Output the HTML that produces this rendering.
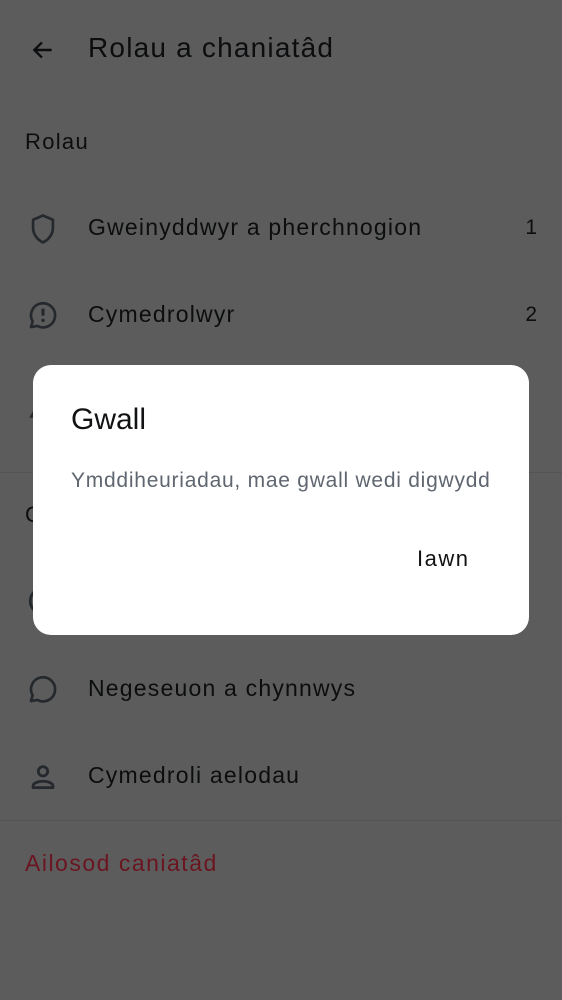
<!DOCTYPE html>
<html><head><meta charset="utf-8"><style>
*{margin:0;padding:0;box-sizing:border-box}
body{width:562px;height:1000px;background:#5c5c5c;font-family:"Liberation Sans",Roboto,sans-serif;position:relative;overflow:hidden;color:#0c0d0e}
.a{position:absolute;white-space:nowrap}
.t{font-size:28px;left:88px;top:32px;letter-spacing:1.2px}
.h{font-size:22px;left:25px;letter-spacing:1.3px}
.r{font-size:23px;left:88px;letter-spacing:1.2px}
.n{font-size:21px;right:25px}
.ic{position:absolute;left:26px}
.div{position:absolute;left:0;right:0;height:1px;background:#545454}
.dlg{position:absolute;left:33px;top:365px;width:496px;height:270px;background:#fff;border-radius:18px}
</style></head><body>
<svg class="a" style="left:30px;top:37px" width="26" height="26" viewBox="0 0 24 24"><path d="M20 12H4M11 5l-7 7 7 7" fill="none" stroke="#0c0d0e" stroke-width="2.2"/></svg>
<div class="a t">Rolau a chaniatâd</div>
<div class="a h" style="top:129px">Rolau</div>

<svg class="ic" style="top:212px" width="34" height="34" viewBox="0 0 24 24"><path d="M12 2.5l7 3v5.5c0 5-3.2 8.7-7 10.5-3.8-1.8-7-5.5-7-10.5V5.5z" fill="none" stroke="#25292d" stroke-width="1.9" stroke-linejoin="round"/></svg>
<div class="a r" style="top:214px">Gweinyddwyr a pherchnogion</div>
<div class="a n" style="top:216px">1</div>

<svg class="ic" style="top:298px" width="34" height="34" viewBox="0 0 24 24"><path d="M3.5 20.5l1.2-4A8.5 8.5 0 1 1 8 19.7z" fill="none" stroke="#25292d" stroke-width="1.9" stroke-linejoin="round"/><path d="M12 7.5v5" stroke="#25292d" stroke-width="2.2"/><circle cx="12" cy="15.8" r="1.2" fill="#25292d"/></svg>
<div class="a r" style="top:301px">Cymedrolwyr</div>
<div class="a n" style="top:303px">2</div>

<svg class="ic" style="top:388px" width="34" height="34" viewBox="0 0 24 24"><path d="M4 20l8-14 8 14z" fill="none" stroke="#25292d" stroke-width="2"/></svg>
<div class="div" style="top:472px"></div>
<div class="a h" style="top:502px">Caniatâd</div>
<svg class="ic" style="top:584px" width="34" height="34" viewBox="0 0 24 24"><circle cx="12" cy="12" r="9" fill="none" stroke="#25292d" stroke-width="2"/></svg>

<svg class="ic" style="top:672px" width="34" height="34" viewBox="0 0 24 24"><path d="M3.5 20.5l1.2-4A8.5 8.5 0 1 1 8 19.7z" fill="none" stroke="#25292d" stroke-width="1.9" stroke-linejoin="round"/></svg>
<div class="a r" style="top:675px">Negeseuon a chynnwys</div>

<svg class="ic" style="top:760px" width="34" height="34" viewBox="0 0 24 24"><circle cx="12" cy="8" r="3.3" fill="none" stroke="#25292d" stroke-width="2"/><path d="M5 19.5v-1.2c0-2 3.5-3.3 7-3.3s7 1.3 7 3.3v1.2z" fill="none" stroke="#25292d" stroke-width="2" stroke-linejoin="round"/></svg>
<div class="a r" style="top:762px">Cymedroli aelodau</div>

<div class="div" style="top:820px"></div>
<div class="a r" style="left:25px;top:850px;color:#6a1520;letter-spacing:1.5px">Ailosod caniatâd</div>

<div class="dlg">
<div class="a" style="left:38px;top:38px;font-size:30px;color:#111214">Gwall</div>
<div class="a" style="left:38px;top:104px;font-size:21px;color:#5f6670;letter-spacing:0.75px">Ymddiheuriadau, mae gwall wedi digwydd</div>
<div class="a" style="left:384px;top:181px;font-size:22px;color:#111214;letter-spacing:1.5px">Iawn</div>
</div>
</body></html>
